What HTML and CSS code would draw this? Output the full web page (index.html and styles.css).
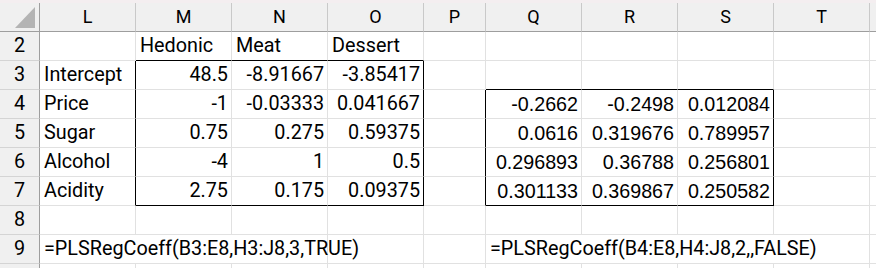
FILE: index.html
```html
<!DOCTYPE html>
<html>
<head>
<meta charset="utf-8">
<link rel="stylesheet" href="styles.css">
</head>
<body>
<div class="band"></div>
<div class="sheet">
  <div class="c h corner"><svg width="39" height="28" viewBox="0 0 39 28"><polygon points="15,25 35,25 35,4" fill="#b4b4b4"/></svg></div>
  <div class="c h">L</div><div class="c h">M</div><div class="c h">N</div><div class="c h">O</div><div class="c h">P</div><div class="c h">Q</div><div class="c h">R</div><div class="c h">S</div><div class="c h">T</div><div class="c h"></div>

  <div class="c rn">2</div><div class="c"></div><div class="c kb">Hedonic</div><div class="c kb">Meat</div><div class="c kb">Dessert</div><div class="c"></div><div class="c"></div><div class="c"></div><div class="c"></div><div class="c"></div><div class="c"></div>

  <div class="c rn">3</div><div class="c kr">Intercept</div><div class="c n">48.5</div><div class="c n">-8.91667</div><div class="c n kr">-3.85417</div><div class="c"></div><div class="c kb"></div><div class="c kb"></div><div class="c kb"></div><div class="c"></div><div class="c"></div>

  <div class="c rn">4</div><div class="c kr">Price</div><div class="c n">-1</div><div class="c n">-0.03333</div><div class="c n kr">0.041667</div><div class="c kr"></div><div class="c n a">-0.2662</div><div class="c n a">-0.2498</div><div class="c n a kr">0.012084</div><div class="c"></div><div class="c"></div>

  <div class="c rn">5</div><div class="c kr">Sugar</div><div class="c n">0.75</div><div class="c n">0.275</div><div class="c n kr">0.59375</div><div class="c kr"></div><div class="c n a">0.0616</div><div class="c n a">0.319676</div><div class="c n a kr">0.789957</div><div class="c"></div><div class="c"></div>

  <div class="c rn">6</div><div class="c kr">Alcohol</div><div class="c n">-4</div><div class="c n">1</div><div class="c n kr">0.5</div><div class="c kr"></div><div class="c n a">0.296893</div><div class="c n a">0.36788</div><div class="c n a kr">0.256801</div><div class="c"></div><div class="c"></div>

  <div class="c rn">7</div><div class="c kr">Acidity</div><div class="c n kb">2.75</div><div class="c n kb">0.175</div><div class="c n kr kb">0.09375</div><div class="c kr"></div><div class="c n a kb">0.301133</div><div class="c n a kb">0.369867</div><div class="c n a kr kb">0.250582</div><div class="c"></div><div class="c"></div>

  <div class="c rn">8</div><div class="c"></div><div class="c"></div><div class="c"></div><div class="c"></div><div class="c"></div><div class="c"></div><div class="c"></div><div class="c"></div><div class="c"></div><div class="c"></div>

  <div class="c rn">9</div><div class="c span3">=PLSRegCoeff(B3:E8,H3:J8,3,TRUE)</div><div class="c"></div><div class="c"></div><div class="c span4">=PLSRegCoeff(B4:E8,H4:J8,2,,FALSE)</div><div class="c"></div>

  <div class="c rn"></div><div class="c"></div><div class="c"></div><div class="c"></div><div class="c"></div><div class="c"></div><div class="c"></div><div class="c"></div><div class="c"></div><div class="c"></div><div class="c"></div>
</div>
</body>
</html>
```

FILE: styles.css
```css
html, body {
  margin: 0;
  padding: 0;
  background: #ffffff;
  overflow: hidden;
  width: 876px;
  height: 268px;
}
.band {
  height: 3px;
  background: #f4eef0;
}
.sheet {
  display: grid;
  grid-template-columns: 40px 96px 96px 96px 96px 62px 96px 96px 96px 96px 1fr;
  grid-auto-rows: 29px;
  font-family: Roboto, "Liberation Sans", sans-serif;
  font-size: 19.8px;
  color: #000;
}
.c {
  box-sizing: border-box;
  height: 29px;
  border-right: 1px solid #e1e1e1;
  border-bottom: 1px solid #e1e1e1;
  padding: 0 4px;
  line-height: 28px;
  white-space: nowrap;
  overflow: hidden;
}
.h {
  background: #f0f0f0;
  border-right-color: #c9c9c9;
  border-bottom-color: #9e9e9e;
  text-align: center;
  font-size: 18px;
  padding: 0;
}
.corner {
  border-right-color: #9e9e9e;
  line-height: 0;
}
.rn {
  background: #f0f0f0;
  border-right-color: #9e9e9e;
  border-bottom-color: #d4d4d4;
  text-align: center;
  padding: 0;
}
.n {
  text-align: right;
  padding-right: 3px;
}
.a {
  font-family: "Liberation Sans", Arial, sans-serif;
  font-size: 19.7px;
  padding-right: 3px;
}
.kr {
  border-right-color: #000;
}
.kb {
  border-bottom-color: #000;
}
.span3 {
  grid-column: span 3;
  overflow: visible;
}
.span4 {
  grid-column: span 4;
  overflow: visible;
}
```
